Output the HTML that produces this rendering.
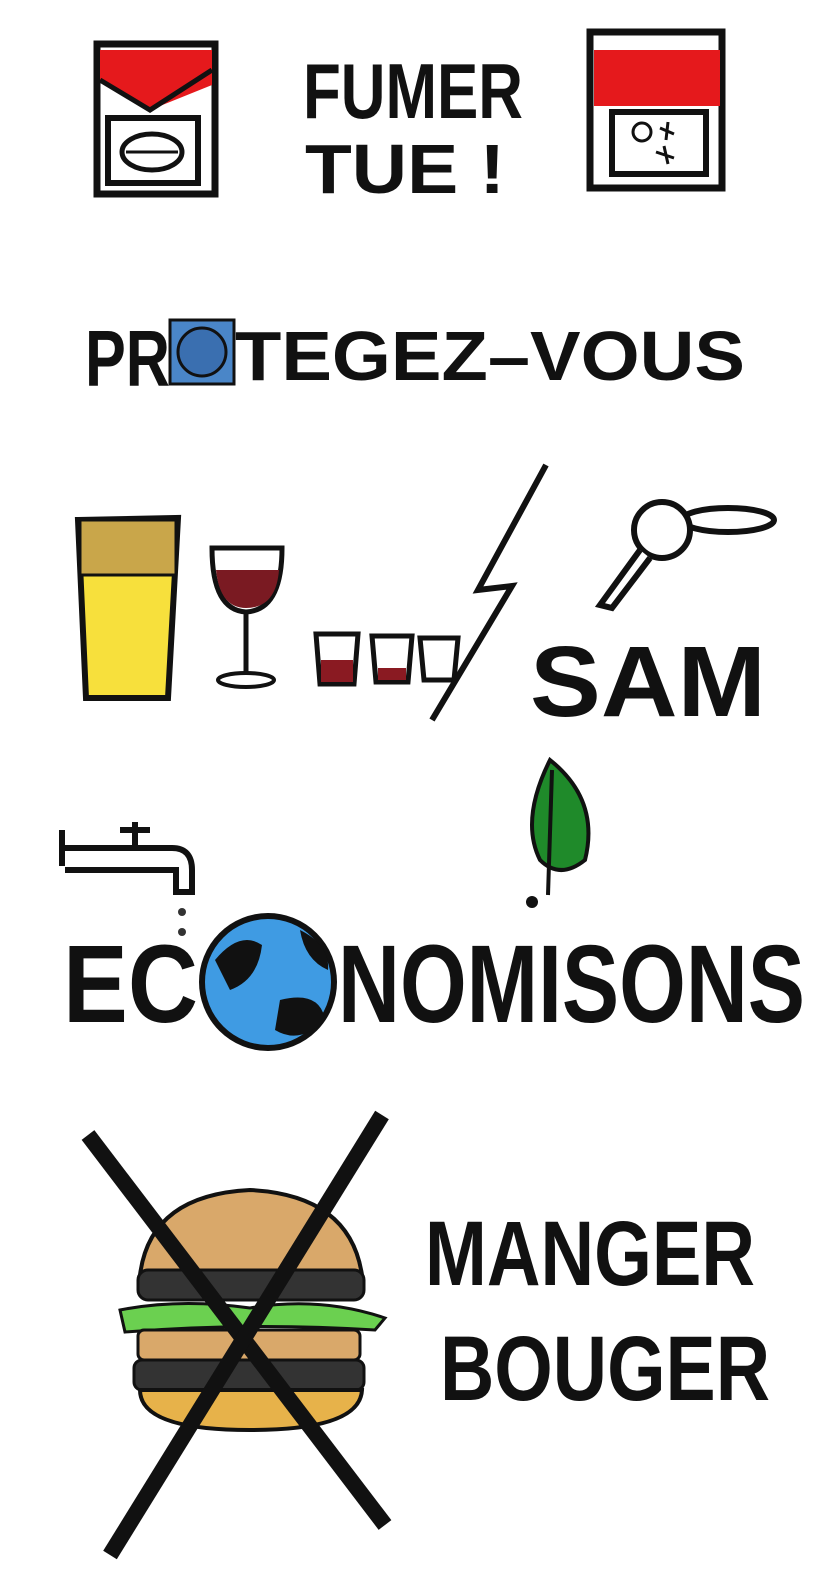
<!DOCTYPE html>
<html><head><meta charset="utf-8"><style>
html,body{margin:0;padding:0;background:#fff;}
svg{display:block}
text{font-family:"Liberation Sans",sans-serif;font-weight:bold;fill:#111}
</style></head><body>
<svg width="836" height="1574" viewBox="0 0 836 1574" xmlns="http://www.w3.org/2000/svg">
<!-- left cigarette pack -->
<rect x="97" y="44" width="118" height="150" fill="#fff" stroke="#111" stroke-width="7"/>
<polygon points="100,50 212,50 212,85 150,110 100,80" fill="#e5191c"/>
<polyline points="100,80 150,110 212,70" fill="none" stroke="#111" stroke-width="5"/>
<rect x="108" y="118" width="90" height="65" fill="#fff" stroke="#111" stroke-width="6"/>
<ellipse cx="152" cy="152" rx="30" ry="18" fill="#fff" stroke="#111" stroke-width="5"/>
<line x1="126" y1="152" x2="178" y2="152" stroke="#111" stroke-width="3"/>
<!-- right cigarette pack -->
<rect x="590" y="32" width="132" height="156" fill="#fff" stroke="#111" stroke-width="7"/>
<rect x="594" y="50" width="126" height="56" fill="#e5191c"/>
<rect x="612" y="112" width="94" height="62" fill="#fff" stroke="#111" stroke-width="6"/>
<circle cx="642" cy="132" r="9" fill="none" stroke="#111" stroke-width="3"/>
<path d="M660 128l14 6M668 122l-2 18M656 152l18 6M664 146l4 18" stroke="#111" stroke-width="3"/>
<!-- FUMER TUE -->
<text x="303" y="118" font-size="78" textLength="220" lengthAdjust="spacingAndGlyphs">FUMER</text>
<text x="305" y="193" font-size="70" textLength="200" lengthAdjust="spacingAndGlyphs">TUE !</text>
<!-- PROTEGEZ-VOUS -->
<rect x="170" y="320" width="64" height="64" fill="#4a86c8" stroke="#111" stroke-width="3"/>
<circle cx="202" cy="352" r="24" fill="#3a6fb0" stroke="#111" stroke-width="3"/>
<text x="85" y="386" font-size="80" textLength="85" lengthAdjust="spacingAndGlyphs">PR</text>
<text x="235" y="380" font-size="70" textLength="510" lengthAdjust="spacingAndGlyphs">TEGEZ–VOUS</text>
<!-- beer -->
<polygon points="78,520 178,518 168,698 86,698" fill="#f7e03c" stroke="#111" stroke-width="6"/>
<rect x="80" y="520" width="96" height="55" fill="#c9a64a" stroke="#111" stroke-width="3"/>
<!-- wine -->
<path d="M212 548 Q212 610 246 612 Q282 610 282 548 Z" fill="#fff" stroke="#111" stroke-width="5"/>
<path d="M216 570 Q220 608 246 608 Q276 608 279 570 Z" fill="#7a1a22"/>
<line x1="246" y1="612" x2="246" y2="676" stroke="#111" stroke-width="5"/>
<ellipse cx="246" cy="680" rx="28" ry="7" fill="#fff" stroke="#111" stroke-width="4"/>
<!-- shots -->
<g stroke="#111" stroke-width="5" fill="#fff">
<polygon points="316,634 358,634 354,684 320,684"/>
<polygon points="372,636 412,636 408,682 376,682"/>
<polygon points="420,638 458,638 454,680 424,680"/>
</g>
<rect x="321" y="660" width="32" height="22" fill="#8a1a22"/>
<rect x="378" y="668" width="28" height="12" fill="#8a1a22"/>
<!-- lightning -->
<polyline points="546,465 478,590 512,586 432,720" fill="none" stroke="#111" stroke-width="6"/>
<!-- key -->
<ellipse cx="728" cy="520" rx="46" ry="12" fill="none" stroke="#111" stroke-width="6"/>
<circle cx="662" cy="530" r="28" fill="#fff" stroke="#111" stroke-width="6"/>
<polyline points="640,550 600,605 612,608 650,558" fill="#fff" stroke="#111" stroke-width="6"/>
<!-- SAM -->
<text x="530" y="716" font-size="100" textLength="236" lengthAdjust="spacingAndGlyphs">SAM</text>
<!-- tap -->
<path d="M62 830 v36 M65 848 H172 Q192 848 192 870 V892 H176 V870 H65" fill="#fff" stroke="#111" stroke-width="6"/>
<path d="M120 830 h30 M135 822 v26" stroke="#111" stroke-width="6"/>
<circle cx="182" cy="912" r="4" fill="#333"/><circle cx="182" cy="932" r="4" fill="#333"/>
<!-- leaf -->
<path d="M550 760 Q600 800 585 860 Q560 880 540 860 Q520 820 550 760 Z" fill="#1f8a2a" stroke="#111" stroke-width="4"/>
<path d="M552 770 L548 895" stroke="#111" stroke-width="4"/>
<circle cx="532" cy="902" r="6" fill="#111"/>
<!-- ECONOMISONS -->
<text x="63" y="1022" font-size="110" textLength="135" lengthAdjust="spacingAndGlyphs">EC</text>
<circle cx="268" cy="982" r="66" fill="#3f9be3" stroke="#111" stroke-width="6"/>
<path d="M215 960 Q240 930 262 945 Q258 980 230 990 Z M280 1000 Q320 990 325 1020 Q300 1045 275 1030 Z M300 930 Q330 945 328 970 Q305 960 300 930 Z" fill="#111"/>
<text x="338" y="1022" font-size="110" textLength="467" lengthAdjust="spacingAndGlyphs">NOMISONS</text>
<!-- burger -->
<path d="M140 1275 Q150 1195 250 1190 Q350 1195 362 1275 Z" fill="#d9a86a" stroke="#111" stroke-width="4"/>
<rect x="138" y="1270" width="226" height="30" rx="10" fill="#333" stroke="#111" stroke-width="3"/>
<path d="M120 1310 Q180 1298 250 1308 Q320 1296 385 1318 L375 1330 Q250 1322 125 1332 Z" fill="#6bd050" stroke="#111" stroke-width="3"/>
<rect x="138" y="1330" width="222" height="30" rx="6" fill="#d9a86a" stroke="#111" stroke-width="3"/>
<rect x="134" y="1360" width="230" height="30" rx="8" fill="#333" stroke="#111" stroke-width="3"/>
<path d="M140 1390 H362 Q360 1430 250 1430 Q140 1430 140 1390 Z" fill="#e7b24a" stroke="#111" stroke-width="4"/>
<!-- X -->
<line x1="88" y1="1135" x2="385" y2="1525" stroke="#111" stroke-width="16"/>
<line x1="382" y1="1115" x2="110" y2="1555" stroke="#111" stroke-width="16"/>
<!-- MANGER BOUGER -->
<text x="425" y="1285" font-size="92" textLength="330" lengthAdjust="spacingAndGlyphs">MANGER</text>
<text x="440" y="1400" font-size="92" textLength="330" lengthAdjust="spacingAndGlyphs">BOUGER</text>
</svg>
</body></html>
